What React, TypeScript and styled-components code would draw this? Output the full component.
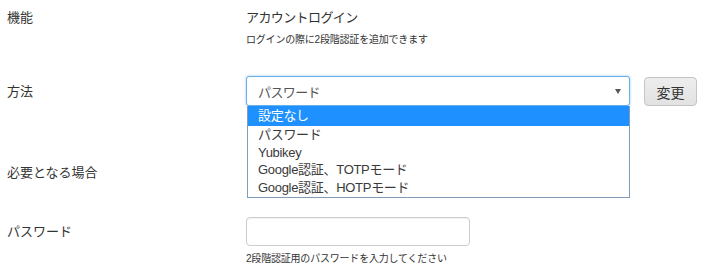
import React from "react";
import styled, { createGlobalStyle } from "styled-components";

const GlobalStyle = createGlobalStyle`
  html, body { margin: 0; padding: 0; background: #fff; }
  body {
    font-family: "Liberation Sans", "Noto Sans CJK JP", Arial, sans-serif;
    color: #333;
  }
`;

const Page = styled.div`
  width: 705px;
  height: 271px;
  padding: 0 0 0 7px;
  box-sizing: border-box;
  overflow: hidden;
`;

const Row = styled.div<{ $mt: number }>`
  display: flex;
  align-items: flex-start;
  margin-top: ${(p) => p.$mt}px;
`;

const Label = styled.div<{ $lh: number }>`
  width: 239px;
  flex: none;
  font-size: 13px;
  line-height: ${(p) => p.$lh}px;
  color: #333;
`;

const Value = styled.div`
  display: flex;
  flex-direction: column;
`;

const Title = styled.div`
  font-size: 13px;
  line-height: 18px;
  color: #333;
  letter-spacing: -0.6px;
`;

const Help = styled.div<{ $mt: number }>`
  font-size: 10px;
  line-height: 14px;
  margin-top: ${(p) => p.$mt}px;
  color: #333;
  letter-spacing: -0.2px;
`;

const Inline = styled.div`
  display: flex;
  align-items: flex-start;
  gap: 14px;
`;

const SelectWrap = styled.div`
  position: relative;
  width: 384px;
`;

const SelectBox = styled.div`
  box-sizing: border-box;
  height: 30px;
  width: 384px;
  border: 1px solid #66afe9;
  border-radius: 3px;
  box-shadow: 0 0 3px rgba(102, 175, 233, 0.6);
  display: flex;
  align-items: center;
  justify-content: space-between;
  padding: 0 8px 0 11px;
  font-size: 13px;
  color: #555;
  background: #fff;
  letter-spacing: -0.6px;
`;

const Caret = styled.span`
  width: 0;
  height: 0;
  border-left: 3px solid transparent;
  border-right: 3px solid transparent;
  border-top: 5px solid #555;
  margin-top: 1px;
`;

const List = styled.ul`
  position: absolute;
  top: 30px;
  left: 1px;
  width: 383px;
  box-sizing: border-box;
  margin: 0;
  padding: 0 0 1px;
  list-style: none;
  background: #fff;
  border: 1px solid #7f9db9;
  border-top: none;
  z-index: 5;
`;

const Item = styled.li<{ $active?: boolean }>`
  height: ${(p) => (p.$active ? 20 : 17.5)}px;
  line-height: ${(p) => (p.$active ? 20 : 17.5)}px;
  padding-left: 10px;
  font-size: 13px;
  letter-spacing: -0.3px;
  color: ${(p) => (p.$active ? "#fff" : "#3a3a3a")};
  background: ${(p) => (p.$active ? "#1e90ff" : "transparent")};
`;

const Button = styled.button`
  box-sizing: border-box;
  height: 29px;
  width: 53px;
  margin-top: 1px;
  border: 1px solid #c4c4c4;
  border-radius: 4px;
  background: linear-gradient(#ededed, #e2e2e2);
  font-family: "Liberation Sans", "Noto Sans CJK JP", sans-serif;
  font-size: 14px;
  color: #333;
  padding: 0;
`;

const Spacer = styled.div`
  height: 30px;
`;

const TextInput = styled.input`
  box-sizing: border-box;
  width: 224px;
  height: 29px;
  border: 1px solid #ccc;
  border-radius: 4px;
  outline: none;
  box-shadow: inset 0 1px 1px rgba(0, 0, 0, 0.05);
`;

export default function App() {
  return (
    <>
      <GlobalStyle />
      <Page>
        <Row $mt={9}>
          <Label $lh={18}>機能</Label>
          <Value>
            <Title>アカウントログイン</Title>
            <Help $mt={6}>ログインの際に2段階認証を追加できます</Help>
          </Value>
        </Row>
        <Row $mt={29}>
          <Label $lh={32}>方法</Label>
          <Value>
            <Inline>
              <SelectWrap>
                <SelectBox>
                  <span>パスワード</span>
                  <Caret />
                </SelectBox>
                <List>
                  <Item $active>設定なし</Item>
                  <Item>パスワード</Item>
                  <Item>Yubikey</Item>
                  <Item>Google認証、TOTPモード</Item>
                  <Item>Google認証、HOTPモード</Item>
                </List>
              </SelectWrap>
              <Button>変更</Button>
            </Inline>
          </Value>
        </Row>
        <Row $mt={50}>
          <Label $lh={30}>必要となる場合</Label>
          <Value>
            <Spacer />
          </Value>
        </Row>
        <Row $mt={29}>
          <Label $lh={29}>パスワード</Label>
          <Value>
            <TextInput type="password" />
            <Help $mt={6}>2段階認証用のパスワードを入力してください</Help>
          </Value>
        </Row>
      </Page>
    </>
  );
}
